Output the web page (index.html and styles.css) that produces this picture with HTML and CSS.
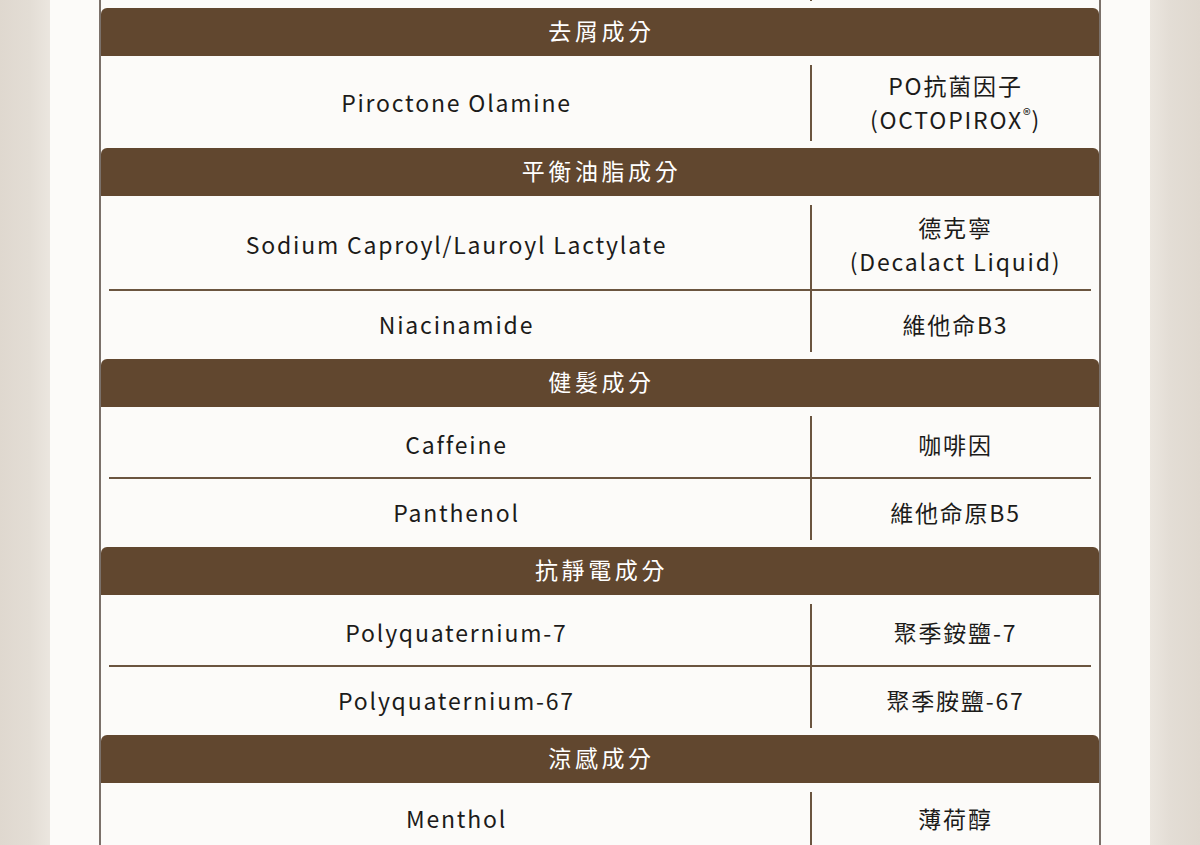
FILE: index.html
```html
<!DOCTYPE html>
<html lang="zh-Hant">
<head>
<meta charset="utf-8">
<title>成分表</title>
<link rel="stylesheet" href="styles.css">
</head>
<body>
<div class="page">
  <div class="table">
    <div class="group-body group-body--tail">
      <div class="row row--stub"><div class="cell cell--name"></div><div class="cell"></div></div>
    </div>

    <section class="group">
      <h2 class="group-title">去屑成分</h2>
      <div class="group-body">
        <div class="row row--tall row--snug"><div class="cell cell--name"><span>Piroctone Olamine</span></div><div class="cell"><span>PO抗菌因子<br>(OCTOPIROX<sup class="reg">®</sup>)</span></div></div>
      </div>
    </section>

    <section class="group">
      <h2 class="group-title">平衡油脂成分</h2>
      <div class="group-body">
        <div class="row row--tall"><div class="cell cell--name"><span>Sodium Caproyl/Lauroyl Lactylate</span></div><div class="cell"><span>德克寧<br>(Decalact Liquid)</span></div></div>
        <div class="row"><div class="cell cell--name"><span>Niacinamide</span></div><div class="cell"><span>維他命B3</span></div></div>
      </div>
    </section>

    <section class="group">
      <h2 class="group-title">健髮成分</h2>
      <div class="group-body">
        <div class="row"><div class="cell cell--name"><span>Caffeine</span></div><div class="cell"><span>咖啡因</span></div></div>
        <div class="row"><div class="cell cell--name"><span>Panthenol</span></div><div class="cell"><span>維他命原B5</span></div></div>
      </div>
    </section>

    <section class="group">
      <h2 class="group-title">抗靜電成分</h2>
      <div class="group-body">
        <div class="row"><div class="cell cell--name"><span>Polyquaternium-7</span></div><div class="cell"><span>聚季銨鹽-7</span></div></div>
        <div class="row"><div class="cell cell--name"><span>Polyquaternium-67</span></div><div class="cell"><span>聚季胺鹽-67</span></div></div>
      </div>
    </section>

    <section class="group">
      <h2 class="group-title">涼感成分</h2>
      <div class="group-body">
        <div class="row"><div class="cell cell--name"><span>Menthol</span></div><div class="cell"><span>薄荷醇</span></div></div>
      </div>
    </section>
  </div>
</div>
</body>
</html>
```

FILE: styles.css
```css
html, body {
  margin: 0;
  padding: 0;
}

body {
  background: linear-gradient(to right, #dfd8cf 0px, #e3ddd5 30px, #ebe6df 50px, #ebe6df 1150px, #e3ddd5 1170px, #dfd8cf 1200px);
  font-family: "Noto Sans CJK TC", "Noto Sans", sans-serif;
  color: #1c1b1a;
  overflow: hidden;
}

.page {
  width: 1100px;
  margin: 0 auto;
  min-height: 845px;
  background: #fcfbf9;
  padding: 0 49px;
  box-sizing: border-box;
}

.table {
  border-left: 2px solid #7b716a;
  border-right: 2px solid #7b716a;
  min-height: 845px;
}

.group {
  margin: 0;
}

.group-title {
  margin: 0;
  height: 48px;
  background: #61472f;
  border-radius: 6px 6px 0 0;
  color: #ffffff;
  font-size: 23px;
  font-weight: 400;
  letter-spacing: 3.6px;
  line-height: 45px;
  text-align: center;
  padding-left: 3px;
}

.group-body {
  padding: 9px 8px 7px 8px;
}

.group-body--tail {
  padding-top: 0;
}

.row {
  display: grid;
  grid-template-columns: 703px 1fr;
  border-bottom: 2px solid #6b5540;
}

.row:last-child {
  border-bottom: none;
}

.cell {
  min-height: 61px;
  padding: 6px 4px 6px 12px;
  box-sizing: border-box;
  display: flex;
  align-items: center;
  justify-content: center;
  text-align: center;
  font-size: 23px;
  line-height: 34px;
  letter-spacing: 1.8px;
}

.cell--name {
  padding: 6px 6px 6px 0;
  border-right: 2px solid #6b5540;
}

.row--tall .cell {
  min-height: 84px;
}

/* text sits a little high in the first row and a little low in the last */
.row:last-child .cell {
  padding-top: 8px;
  padding-bottom: 4px;
}

.row:first-child .cell {
  padding-top: 3px;
  padding-bottom: 9px;
}

.row:only-child .cell {
  padding-top: 1px;
  padding-bottom: 11px;
}

.row.row--snug .cell {
  min-height: 76px;
  padding-top: 3px;
  padding-bottom: 5px;
}

.row.row--stub .cell {
  min-height: 1px;
  padding-top: 0;
  padding-bottom: 0;
}

.reg {
  font-size: 0.7em;
  line-height: 0;
  vertical-align: 0.5em;
  letter-spacing: 1px;
}
```
